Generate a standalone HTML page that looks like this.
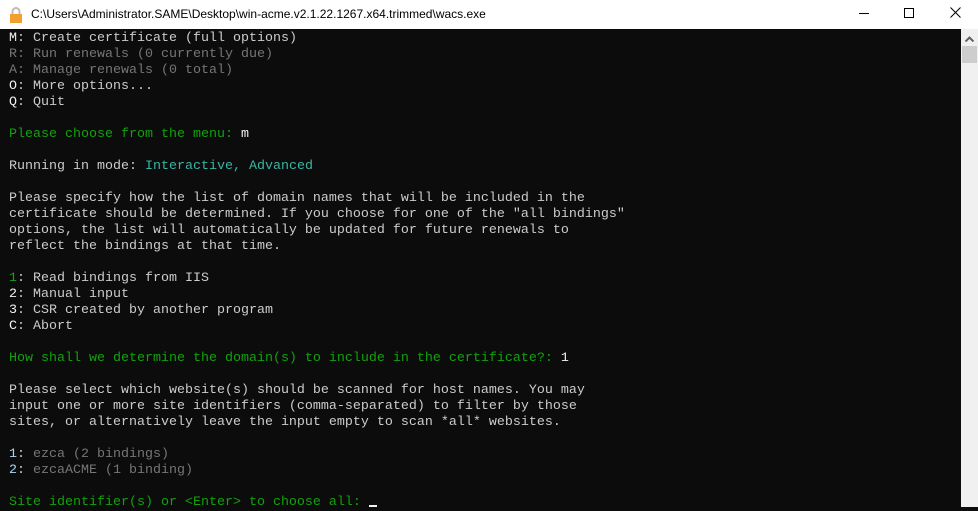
<!DOCTYPE html>
<html><head><meta charset="utf-8"><style>
html,body{margin:0;padding:0;width:978px;height:507px;overflow:hidden;background:#0c0c0c}
#title{position:absolute;left:0;top:0;width:978px;height:29px;background:#fff;font-family:"Liberation Sans",sans-serif;font-size:12px;color:#000}
#title .t{position:absolute;left:31px;top:7px}
#con{position:absolute;left:0;top:29px;width:961px;height:478px;background:#0c0c0c}
pre{margin:0;position:absolute;left:9px;top:2px;font-family:"Liberation Mono",monospace;font-size:13.33px;line-height:16px;color:#cccccc}
.g{color:#767676}.gn{color:#13a10e}.c{color:#3ab5a4}.w{color:#f2f2f2}.b{color:#a7d8f0}
#sb{position:absolute;left:961px;top:29px;width:17px;height:478px;background:#f0f0f0}
.cur{display:inline-block;width:8px;height:2px;background:#f2f2f2;vertical-align:-2px}
</style></head><body>
<div id="title">
<svg style="position:absolute;left:9px;top:6px" width="14" height="17" viewBox="0 0 14 17"><path d="M3.5 8V5.5a3.5 3.5 0 0 1 7 0V8" fill="none" stroke="#bbb" stroke-width="2"/><rect x="1" y="8" width="12" height="9" fill="#f0a02c"/></svg>
<span class="t">C:\Users\Administrator.SAME\Desktop\win-acme.v2.1.22.1267.x64.trimmed\wacs.exe</span>
<div style="position:absolute;left:859px;top:13px;width:10px;height:1px;background:#000"></div>
<div style="position:absolute;left:904px;top:8px;width:8px;height:8px;border:1px solid #000"></div>
<svg style="position:absolute;left:950px;top:7px" width="11" height="11"><path d="M0.5 0.5L10.5 10.5M10.5 0.5L0.5 10.5" stroke="#000" stroke-width="1"/></svg>
</div>
<div id="con"><pre><span class="w">M</span>: Create certificate (full options)
<span class="g">R: Run renewals (0 currently due)
A: Manage renewals (0 total)</span>
<span class="w">O</span>: More options...
<span class="w">Q</span>: Quit

<span class="gn">Please choose from the menu: </span><span class="w">m</span>

Running in mode: <span class="c">Interactive, Advanced</span>

Please specify how the list of domain names that will be included in the
certificate should be determined. If you choose for one of the "all bindings"
options, the list will automatically be updated for future renewals to
reflect the bindings at that time.

<span class="gn">1</span>: Read bindings from IIS
<span class="w">2</span>: Manual input
<span class="w">3</span>: CSR created by another program
<span class="w">C</span>: Abort

<span class="gn">How shall we determine the domain(s) to include in the certificate?: </span><span class="w">1</span>

Please select which website(s) should be scanned for host names. You may
input one or more site identifiers (comma-separated) to filter by those
sites, or alternatively leave the input empty to scan *all* websites.

<span class="b">1</span>: <span class="g">ezca (2 bindings)</span>
<span class="b">2</span>: <span class="g">ezcaACME (1 binding)</span>

<span class="gn">Site identifier(s) or &lt;Enter&gt; to choose all: </span><span class="cur"></span></pre></div>
<div id="sb">
<svg style="position:absolute;left:4px;top:7px" width="9" height="6"><path d="M0.5 5.5L4.5 1.5L8.5 5.5" fill="none" stroke="#606060" stroke-width="2"/></svg>
<div style="position:absolute;left:1px;top:17px;width:15px;height:17px;background:#cdcdcd"></div>
</div>
</body></html>
